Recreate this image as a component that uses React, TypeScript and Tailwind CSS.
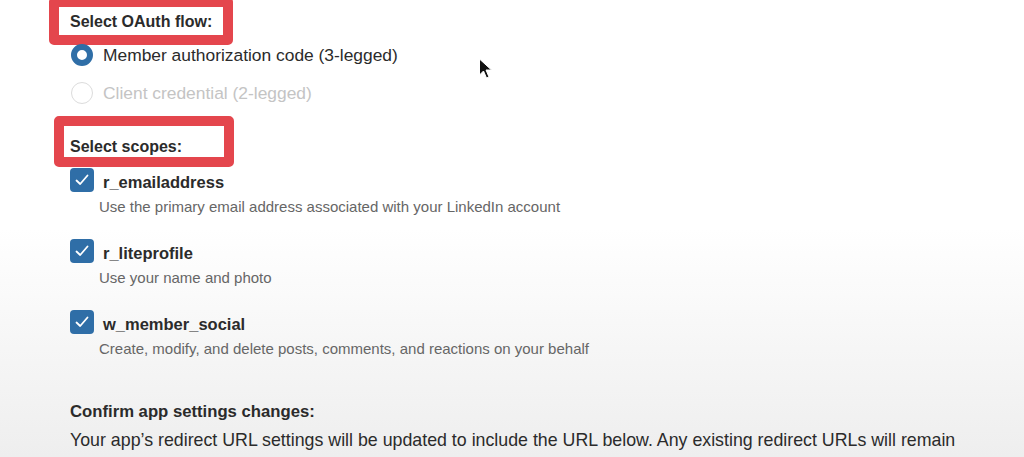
import React from 'react';

const SCOPES = [
  { name: 'r_emailaddress', desc: 'Use the primary email address associated with your LinkedIn account' },
  { name: 'r_liteprofile', desc: 'Use your name and photo' },
  { name: 'w_member_social', desc: 'Create, modify, and delete posts, comments, and reactions on your behalf' },
];

const Check: React.FC = () => (
  <div className="w-[24px] h-[24px] rounded-[4px] bg-[#2f6ea7] flex items-center justify-center shrink-0">
    <svg width="16" height="16" viewBox="0 0 16 16" fill="none">
      <path d="M2.5 8.5 L6.2 12 L13.5 3.5" stroke="white" strokeWidth="1.8" strokeLinecap="round" strokeLinejoin="round" />
    </svg>
  </div>
);

const App: React.FC = () => {
  return (
    <div className="relative w-full h-[457px] overflow-hidden bg-gradient-to-b from-white via-white to-[#eeeeee] font-['Liberation_Sans',Arial,sans-serif] text-[#2b2b2b]">
      <div className="pl-[49px] -mt-[3px]">
        <div className="w-[184px] h-[48px] border-[10px] border-[#e4464d] rounded-[5px] bg-white flex items-center pl-[11px] pt-[2px]">
          <span className="text-[16px] font-bold leading-[20px] whitespace-nowrap">Select OAuth flow:</span>
        </div>
      </div>

      <div className="pl-[71px] flex flex-col gap-[18px]">
        <div className="flex items-center h-[20px]">
          <div className="w-[22px] h-[22px] rounded-full border-[6px] border-[#2f6ea7] bg-white shrink-0" />
          <span className="ml-[10px] text-[17.4px] leading-[20px] whitespace-nowrap">Member authorization code (3-legged)</span>
        </div>
        <div className="flex items-center h-[20px]">
          <div className="w-[22px] h-[22px] rounded-full border-[1.5px] border-[#dcdcdc] bg-white shrink-0" />
          <span className="ml-[10px] text-[17.4px] leading-[20px] text-[#c4c4c4] whitespace-nowrap">Client credential (2-legged)</span>
        </div>
      </div>

      <div className="pl-[54px] mt-[13px]">
        <div className="w-[180px] h-[51px] border-[10px] border-[#e4464d] rounded-[5px] bg-white pl-[6px] pt-[9px]">
          <span className="text-[16px] font-bold leading-[20px] whitespace-nowrap">Select scopes:</span>
        </div>
      </div>

      <div className="pl-[70px] mt-[1px] flex flex-col gap-[23px]">
        {SCOPES.map((s) => (
          <div key={s.name}>
            <div className="flex items-center h-[24px]">
              <Check />
              <span className="ml-[9px] text-[16.5px] font-semibold leading-[20px] pt-[3px] whitespace-nowrap">{s.name}</span>
            </div>
            <div className="mt-[6px] pl-[29px] text-[15px] leading-[18px] text-[#666666] whitespace-nowrap">{s.desc}</div>
          </div>
        ))}
      </div>

      <div className="pl-[70px] mt-[43px]">
        <div className="text-[16.7px] font-semibold leading-[22px] whitespace-nowrap">Confirm app settings changes:</div>
        <div className="mt-[6px] text-[17.8px] leading-[22px] whitespace-nowrap">
          Your app’s redirect URL settings will be updated to include the URL below. Any existing redirect URLs will remain
        </div>
      </div>

      <svg className="absolute left-[478px] top-[58px]" width="16" height="22" viewBox="0 0 16 22">
        <path d="M1.5 1 L1.5 17 L5.5 13 L8.5 20 L11 19 L8 12 L13.5 12 Z" fill="#111" stroke="white" strokeWidth="1" strokeLinejoin="round" />
      </svg>
    </div>
  );
};

export default App;
